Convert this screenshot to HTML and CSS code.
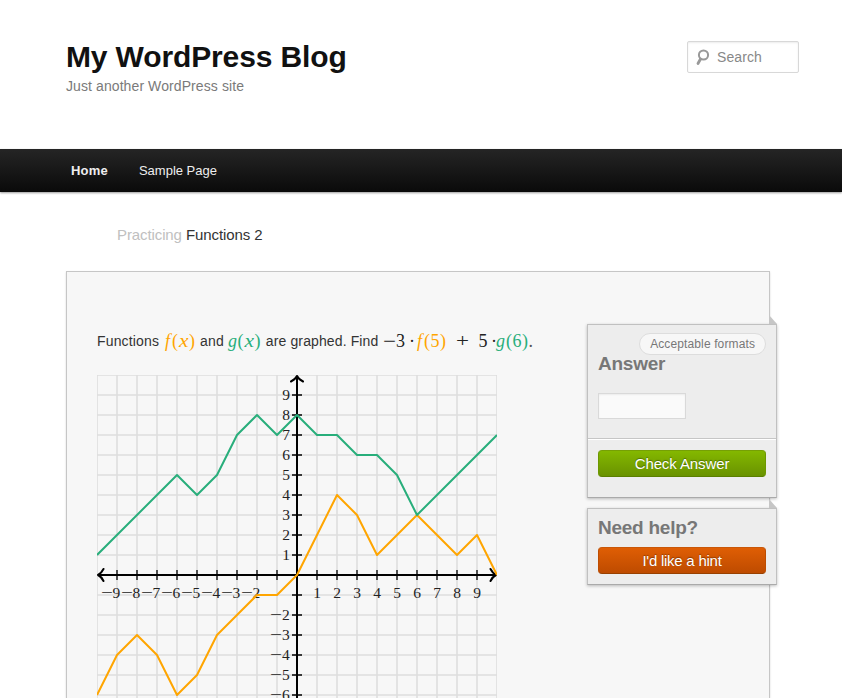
FILE: index.html
```html
<!DOCTYPE html>
<html lang="en">
<head>
<meta charset="utf-8">
<title>My WordPress Blog</title>
<link rel="stylesheet" href="styles.css">
</head>
<body>
<header class="branding">
  <div>
    <h1>My WordPress Blog</h1>
    <p class="tagline">Just another WordPress site</p>
  </div>
  <label class="search">
    <svg width="14" height="17" viewBox="0 0 14 17" fill="none" stroke="#999" stroke-width="2"><circle cx="7.500" cy="6" r="4.600"/><path d="M4.500 10 2 14.500" stroke-width="2.800" stroke-linecap="round"/></svg>
    <span>Search</span>
  </label>
</header>
<nav class="menu"><a class="current">Home</a><a>Sample Page</a></nav>
<div class="crumb"><span>Practicing</span> Functions 2</div>
<main class="exercise">
  <section class="problem">
    <p class="question">
      <span>Functions</span>
      <svg class="math fx" width="33" height="24"><text y="17.5"><tspan class="i" x="2">f</tspan><tspan x="9">(</tspan><tspan class="i" x="16" textLength="9.5" lengthAdjust="spacingAndGlyphs">x</tspan><tspan x="26">)</tspan></text></svg>
      <span>and</span>
      <svg class="math gx" width="33" height="24"><text y="17.5"><tspan class="i" x="0">g</tspan><tspan x="9.5">(</tspan><tspan class="i" x="16.5" textLength="9.5" lengthAdjust="spacingAndGlyphs">x</tspan><tspan x="26.5">)</tspan></text></svg>
      <span>are graphed. Find</span>
      <svg class="math expr" width="149" height="24"><text y="17.5"><tspan x="0" textLength="13" lengthAdjust="spacingAndGlyphs">−</tspan><tspan x="13">3</tspan><tspan x="26">·</tspan><tspan class="fx i" x="34">f</tspan><tspan class="fx" x="41">(</tspan><tspan class="fx" x="47.5">5</tspan><tspan class="fx" x="57">)</tspan><tspan x="73" textLength="13" lengthAdjust="spacingAndGlyphs">+</tspan><tspan x="95.5">5</tspan><tspan x="108">·</tspan><tspan class="gx i" x="113">g</tspan><tspan class="gx" x="123">(</tspan><tspan class="gx" x="129.500">6</tspan><tspan class="gx" x="139">)</tspan><tspan class="dot" x="145.500">.</tspan></text></svg>
    </p>
    <svg class="graph" width="400" height="323" viewBox="-200 -200 400 323">
      <path class="grid" d="M-200-200V200M-180-200V200M-160-200V200M-140-200V200M-120-200V200M-100-200V200M-80-200V200M-60-200V200M-40-200V200M-20-200V200M0-200V200M20-200V200M40-200V200M60-200V200M80-200V200M100-200V200M120-200V200M140-200V200M160-200V200M180-200V200M200-200V200M-200-200H200M-200-180H200M-200-160H200M-200-140H200M-200-120H200M-200-100H200M-200-80H200M-200-60H200M-200-40H200M-200-20H200M-200 0H200M-200 20H200M-200 40H200M-200 60H200M-200 80H200M-200 100H200M-200 120H200"/>
      <path class="axis" d="M-199 0H199M0-199V200M-193.500-6C-195-3-197-1-199 0-197 1-195 3-193.500 6M193.500-6C195-3 197-1 199 0 197 1 195 3 193.500 6M-6-193.500C-3-195-1-197 0-199 1-197 3-195 6-193.500"/>
      <path class="ticks" d="M-180-5V5M-160-5V5M-140-5V5M-120-5V5M-100-5V5M-80-5V5M-60-5V5M-40-5V5M-20-5V5M20-5V5M40-5V5M60-5V5M80-5V5M100-5V5M120-5V5M140-5V5M160-5V5M180-5V5M-5-180H5M-5-160H5M-5-140H5M-5-120H5M-5-100H5M-5-80H5M-5-60H5M-5-40H5M-5-20H5M-5 20H5M-5 40H5M-5 60H5M-5 80H5M-5 100H5M-5 120H5"/>
      <g class="labels">
        <text x="20" y="23">1</text><text x="40" y="23">2</text><text x="60" y="23">3</text><text x="80" y="23">4</text><text x="100" y="23">5</text><text x="120" y="23">6</text><text x="140" y="23">7</text><text x="160" y="23">8</text><text x="180" y="23">9</text>
        <text x="-11" y="-175">9</text><text x="-11" y="-155">8</text><text x="-11" y="-135">7</text><text x="-11" y="-115">6</text><text x="-11" y="-95">5</text><text x="-11" y="-75">4</text><text x="-11" y="-55">3</text><text x="-11" y="-35">2</text><text x="-11" y="-15">1</text>
      </g>
      <g class="labels neg">
        <text y="23"><tspan x="-196" textLength="12" lengthAdjust="spacingAndGlyphs">−</tspan><tspan x="-184.500">9</tspan></text>
        <text y="23"><tspan x="-176" textLength="12" lengthAdjust="spacingAndGlyphs">−</tspan><tspan x="-164.500">8</tspan></text>
        <text y="23"><tspan x="-156" textLength="12" lengthAdjust="spacingAndGlyphs">−</tspan><tspan x="-144.500">7</tspan></text>
        <text y="23"><tspan x="-136" textLength="12" lengthAdjust="spacingAndGlyphs">−</tspan><tspan x="-124.500">6</tspan></text>
        <text y="23"><tspan x="-116" textLength="12" lengthAdjust="spacingAndGlyphs">−</tspan><tspan x="-104.500">5</tspan></text>
        <text y="23"><tspan x="-96" textLength="12" lengthAdjust="spacingAndGlyphs">−</tspan><tspan x="-84.500">4</tspan></text>
        <text y="23"><tspan x="-76" textLength="12" lengthAdjust="spacingAndGlyphs">−</tspan><tspan x="-64.500">3</tspan></text>
        <text y="23"><tspan x="-56" textLength="12" lengthAdjust="spacingAndGlyphs">−</tspan><tspan x="-44.500">2</tspan></text>
        <text y="45"><tspan x="-27" textLength="12" lengthAdjust="spacingAndGlyphs">−</tspan><tspan x="-15">2</tspan></text>
        <text y="65"><tspan x="-27" textLength="12" lengthAdjust="spacingAndGlyphs">−</tspan><tspan x="-15">3</tspan></text>
        <text y="85"><tspan x="-27" textLength="12" lengthAdjust="spacingAndGlyphs">−</tspan><tspan x="-15">4</tspan></text>
        <text y="105"><tspan x="-27" textLength="12" lengthAdjust="spacingAndGlyphs">−</tspan><tspan x="-15">5</tspan></text>
        <text y="125"><tspan x="-27" textLength="12" lengthAdjust="spacingAndGlyphs">−</tspan><tspan x="-15">6</tspan></text>
      </g>
      <polyline class="plot-f" points="-200,120 -180,80 -160,60 -140,80 -120,120 -100,100 -80,60 -60,40 -40,20 -20,20 0,0 20,-40 40,-80 60,-60 80,-20 100,-40 120,-60 140,-40 160,-20 180,-40 200,0"/>
      <polyline class="plot-g" points="-200,-20 -120,-100 -100,-80 -80,-100 -60,-140 -40,-160 -20,-140 0,-160 20,-140 40,-140 60,-120 80,-120 100,-100 120,-60 200,-140"/>
    </svg>
  </section>
  <aside class="side">
    <section class="card">
      <div class="answer">
        <a class="formats">Acceptable formats</a>
        <h2>Answer</h2>
        <input type="text" aria-label="Answer">
      </div>
      <div class="check"><button class="btn green">Check Answer</button></div>
    </section>
    <section class="card help">
      <h2>Need help?</h2>
      <button class="btn orange">I'd like a hint</button>
    </section>
  </aside>
</main>
</body>
</html>
```

FILE: styles.css
```css
* { box-sizing: border-box; }
html { overflow: hidden; }
body {
  margin: 0;
  height: 698px;
  overflow: hidden;
  background: #fff;
  color: #333;
  font: 14px/20px "Liberation Sans", Arial, sans-serif;
}
h1, h2, p { margin: 0; }
.branding {
  display: flex;
  justify-content: space-between;
  align-items: flex-start;
  height: 149px;
  padding: 38px 43px 0 66px;
}
h1 { color: #111; font-size: 30px; line-height: 37px; letter-spacing: -.13px; }
.tagline { color: #7a7a7a; font-size: 14px; line-height: 22px; letter-spacing: .09px; }
.search {
  display: flex;
  align-items: center;
  gap: 7px;
  width: 112px;
  height: 32px;
  margin-top: 3px;
  padding-left: 8px;
  border: 1px solid #d8d8d8;
  border-radius: 2px;
  box-shadow: inset 0 1px 2px rgba(0, 0, 0, .08);
  color: #888;
  letter-spacing: .1px;
}
.menu {
  display: flex;
  gap: 31px;
  height: 43px;
  padding-left: 71px;
  background: linear-gradient(#252525, #0a0a0a);
  box-shadow: 0 1px 2px rgba(0, 0, 0, .4);
  color: #eee;
  font-size: 13px;
  line-height: 43px;
}
.current { font-weight: bold; letter-spacing: .2px; }
.crumb { height: 79px; padding: 33px 0 0 117px; font-size: 15px; letter-spacing: -.1px; }
.crumb span { color: #c0c0c0; }
.exercise {
  display: flex;
  justify-content: space-between;
  width: 704px;
  height: 427px;
  margin-left: 66px;
  padding-left: 30px;
  border: 1px solid #c6c6c6;
  border-bottom: 0;
  background: #f7f7f7;
  box-shadow: 0 1px 2px rgba(0, 0, 0, .15);
}
.problem { padding-top: 57px; }
.question { display: flex; align-items: center; height: 24px; gap: 4px; white-space: nowrap; letter-spacing: .15px; }
.question span { flex: none; }
.question span:last-of-type { letter-spacing: .12px; margin-right: 1px; }
.math { flex: none; overflow: visible; fill: #222; font: 18px "Liberation Serif", serif; letter-spacing: 0; }
.gx.math { margin-right: 1px; }
.i { font-style: italic; }
.fx { fill: #ffa500; }
.gx { fill: #28ae7b; }
.dot { fill: #555; }
.graph { display: block; margin-top: 22px; }
.grid { stroke: #000; stroke-opacity: .1; stroke-width: 1.6; fill: none; }
.axis { stroke: #000; stroke-width: 2; fill: none; stroke-linecap: round; stroke-linejoin: round; }
.ticks { stroke: #000; stroke-width: 1.3; }
.labels { fill: #222; font: 15.5px "Liberation Serif", serif; text-anchor: middle; }
.labels.neg { text-anchor: start; }
.plot-f, .plot-g { fill: none; stroke-width: 2; stroke-linejoin: round; }
.plot-f { stroke: #ffa500; }
.plot-g { stroke: #28ae7b; }
.side { width: 190px; margin: 52px -8px 0 0; }
.card {
  position: relative;
  height: 174px;
  margin-bottom: 10px;
  border: 1px solid #c0c0c0;
  border-bottom-color: #aaa;
  background: #ededed;
  box-shadow: 0 1px 3px rgba(0, 0, 0, .25);
}
.card::before {
  content: "";
  position: absolute;
  right: -1px;
  top: -10px;
  border-left: 8px solid #c6c6c6;
  border-top: 9px solid transparent;
}
.answer { display: flex; flex-direction: column; height: 114px; padding: 8px 10px 0; border-bottom: 1px solid #c6c6c6; }
.formats {
  align-self: flex-end;
  height: 22px;
  padding: 0 10px;
  border: 1px solid #ddd;
  border-radius: 11px;
  background: #f7f7f7;
  color: #777;
  font-size: 12px;
  line-height: 21px;
  letter-spacing: .12px;
}
h2 { color: #777; font-size: 19px; line-height: 20px; letter-spacing: -.25px; }
.answer h2 { margin-top: -1px; }
input { width: 88px; height: 26px; margin-top: 19px; border: 1px solid #d9d9d9; background: #fafafa; box-shadow: inset 0 1px 2px rgba(0, 0, 0, .06); }
.check { padding: 10px 10px 0; border-top: 1px solid #fff; }
.btn {
  display: block;
  width: 168px;
  height: 27px;
  padding: 0;
  border: 1px solid;
  border-radius: 4px;
  color: #fff;
  font: 15px/25px "Liberation Sans", Arial, sans-serif;
  letter-spacing: -.1px;
  text-shadow: 0 -1px 1px rgba(0, 0, 0, .35);
}
.orange { letter-spacing: -.25px; }
.green { border-color: #76a005 #6d9700 #5a7f00; background: linear-gradient(#84b800, #699200); }
.orange { border-color: #c95708 #bd4c00 #984000; background: linear-gradient(#df5e04, #be4b00); }
.help { height: 77px; padding: 9px 10px 0; }
.help .btn { margin-top: 9px; }
```
